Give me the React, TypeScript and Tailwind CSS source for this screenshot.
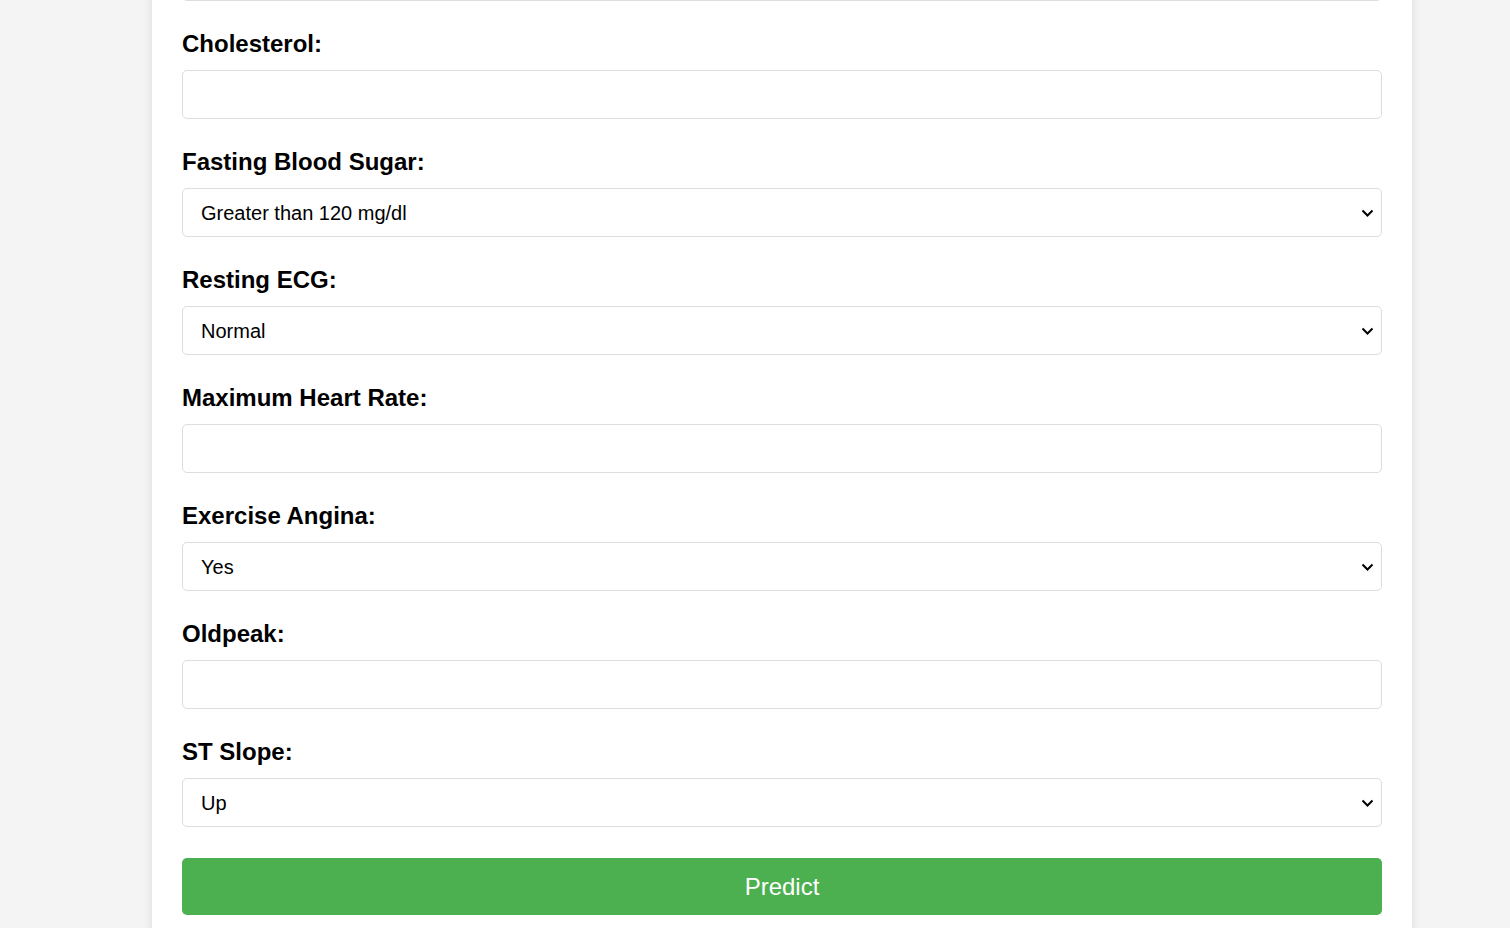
type Field =
  | { label: string; kind: "input" }
  | { label: string; kind: "select"; options: string[] };

const fields: Field[] = [
  { label: "Cholesterol:", kind: "input" },
  {
    label: "Fasting Blood Sugar:",
    kind: "select",
    options: ["Greater than 120 mg/dl", "Less than or equal to 120 mg/dl"],
  },
  { label: "Resting ECG:", kind: "select", options: ["Normal", "ST", "LVH"] },
  { label: "Maximum Heart Rate:", kind: "input" },
  { label: "Exercise Angina:", kind: "select", options: ["Yes", "No"] },
  { label: "Oldpeak:", kind: "input" },
  { label: "ST Slope:", kind: "select", options: ["Up", "Flat", "Down"] },
];

const boxCls =
  "block w-full h-[49px] px-[18px] text-[20px] leading-[1.15] text-black bg-white border border-[#dddddd] rounded-[5px] outline-none";

function Select({ options }: { options: string[] }) {
  return (
    <div className="relative">
      <select className={boxCls + " appearance-none pr-[36px] pt-[2px]"} defaultValue={options[0]}>
        {options.map((o) => (
          <option key={o}>{o}</option>
        ))}
      </select>
      <svg
        className="absolute right-[8px] top-1/2 -translate-y-1/2 pointer-events-none"
        width="13"
        height="8"
        viewBox="0 0 13 8"
        fill="none"
      >
        <path d="M1.5 1.5 L6.5 6.5 L11.5 1.5" stroke="#000" strokeWidth="2" />
      </svg>
    </div>
  );
}

export default function App() {
  return (
    <div className="h-[928px] bg-[#f4f4f4] overflow-hidden font-['Liberation_Sans',Arial,sans-serif]">
      <div className="ml-[152px] w-[1260px] bg-white px-[30px] pb-[30px] shadow-[0_0_10px_rgba(0,0,0,0.1)]">
        {/* tail of the field above the fold */}
        <div className={boxCls + " -mt-[48px]"} />
        {fields.map((f) => (
          <div key={f.label} className="pt-[29px]">
            <label className="block text-[24px] leading-[28px] font-bold text-black mb-[12px]">{f.label}</label>
            {f.kind === "input" ? <input type="text" className={boxCls} /> : <Select options={f.options} />}
          </div>
        ))}
        <button className="mt-[31px] w-full h-[57px] bg-[#4caf50] text-white text-[24px] leading-[28px] rounded-[5px]">
          Predict
        </button>
      </div>
    </div>
  );
}
